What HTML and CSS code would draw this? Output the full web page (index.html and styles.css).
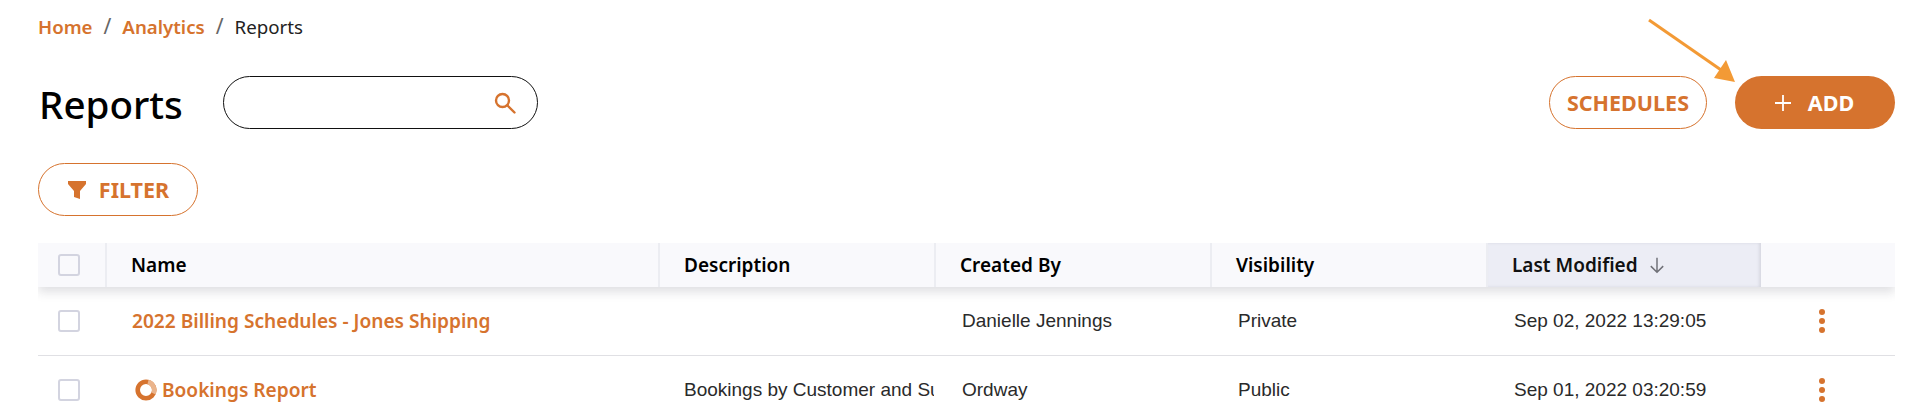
FILE: index.html
```html
<!DOCTYPE html>
<html lang="en">
<head>
<meta charset="utf-8">
<title>Reports</title>
<link rel="stylesheet" href="styles.css">
</head>
<body>
<svg class="arrow" width="100" height="75" viewBox="0 0 100 75"><path d="M3 3 L78 55" stroke="#f39a35" stroke-width="3" fill="none"/><path d="M89 65 L68 61 L80 43 Z" fill="#f39a35"/></svg>
<nav class="crumbs"><a>Home</a><span class="sep">/</span><a>Analytics</a><span class="sep">/</span><span class="cur">Reports</span></nav>
<header class="top">
  <h1>Reports</h1>
  <div class="search">
    <svg width="24" height="24" viewBox="0 0 24 24" fill="none" stroke="#d6732e" stroke-width="2.4"><circle cx="9.5" cy="9.5" r="6.5"/><path d="M14.5 14.5 L21.5 21.5" stroke-linecap="round"/></svg>
  </div>
  <div class="actions">
    <button class="btn outline sched">SCHEDULES</button>
    <button class="btn solid"><svg width="18" height="18" viewBox="0 0 18 18"><path d="M9 1v16M1 9h16" stroke="#fff" stroke-width="1.8"/></svg>ADD</button>
  </div>
</header>
<div class="filters">
  <button class="btn outline filter"><svg width="20" height="20" viewBox="0 0 20 20"><path d="M1 1h18v3l-6 7v8l-6-2v-6L1 4z" fill="#d6732e"/></svg>FILTER</button>
</div>
<section class="table">
  <div class="row head">
    <div class="c check"><span class="box"></span></div>
    <div class="c name">Name</div>
    <div class="c desc">Description</div>
    <div class="c by">Created By</div>
    <div class="c vis">Visibility</div>
    <div class="c mod active">Last Modified <svg width="18" height="18" viewBox="0 0 16 16" fill="none" stroke="#6f7077" stroke-width="1.3"><path d="M8 1.500v13M2.500 9l5.500 5.500L13.500 9"/></svg></div>
    <div class="c more"></div>
  </div>
  <div class="row body">
    <div class="c check"><span class="box"></span></div>
    <div class="c name link">2022 Billing Schedules - Jones Shipping</div>
    <div class="c desc"></div>
    <div class="c by">Danielle Jennings</div>
    <div class="c vis">Private</div>
    <div class="c mod">Sep 02, 2022 13:29:05</div>
    <div class="c more"><span class="dots"><i></i><i></i><i></i></span></div>
  </div>
  <div class="row body">
    <div class="c check"><span class="box"></span></div>
    <div class="c name link"><svg class="ring" width="22" height="22" viewBox="0 0 22 22" fill="none" stroke-width="4.6"><circle cx="11" cy="11" r="8.300" stroke="#d6732e"/><path d="M13 3A8.300 8.300 0 0 1 18.500 14.500" stroke="#eab48c"/></svg>Bookings Report</div>
    <div class="c desc">Bookings by Customer and Su</div>
    <div class="c by">Ordway</div>
    <div class="c vis">Public</div>
    <div class="c mod">Sep 01, 2022 03:20:59</div>
    <div class="c more"><span class="dots"><i></i><i></i><i></i></span></div>
  </div>
</section>
</body>
</html>
```
FILE: styles.css
```css
* { box-sizing: border-box; }
html, body { margin: 0; height: 416px; overflow: hidden; background: #fff; }
body { padding: 14px 27px 0 38px; font-family: "Noto Sans", sans-serif; color: #000; position: relative; }
.arrow { position: absolute; left: 1646px; top: 17px; }
.crumbs { display: flex; align-items: center; height: 24px; font-size: 18.700px; }
.crumbs a { color: #d6732e; font-weight: 600; }
.crumbs .sep { color: #666; margin: 0 11px; font-size: 21px; font-weight: 400; }
.crumbs .cur { color: #222; }
.top { display: flex; align-items: center; margin-top: 38px; height: 53px; }
h1 { margin: 4px 0 0; font-size: 38.600px; font-weight: 500; width: 185px; padding-left: 1px; line-height: 53px; }
.search { width: 315px; height: 53px; border: 1.500px solid #111; border-radius: 27px; display: flex; align-items: center; justify-content: flex-end; padding-right: 20px; }
.actions { margin-left: auto; display: flex; gap: 28px; }
.btn { height: 53px; border-radius: 27px; font-family: "Noto Sans", sans-serif; font-weight: 700; font-size: 21.500px; display: inline-flex; align-items: center; justify-content: center; padding: 0; }
.outline { background: #fff; border: 1px solid #d6732e; color: #d6732e; }
.solid { background: #d6732e; border: 0; color: #fff; width: 160px; gap: 16px; padding-right: 2px; }
.sched { width: 158px; }
.filters { margin-top: 34px; }
.filter { width: 160px; gap: 12px; }
.table { margin-top: 27px; }
.row { display: grid; grid-template-columns: 67px 553px 276px 276px 276px 275px 1fr; }
.head { height: 44px; background: #f9f9fc; font-weight: 600; font-size: 19px; box-shadow: 0 5px 10px rgba(40,40,60,.15); clip-path: inset(0 0 -24px 0); position: relative; }
.c { display: flex; align-items: center; padding-left: 24px; gap: 10px; min-width: 0; white-space: nowrap; overflow: hidden; }
.head .c { border-left: 2px solid #ecedf2; }
.head .check { border-left: 0; }
.head .more { border-left: 0; }
.head .active { background: #ecedf5; box-shadow: inset -2px 0 3px rgba(40,40,60,.1); color: #111; }
.check { padding-left: 20px; }
.head .check { padding-left: 20px; }
.box { width: 22px; height: 22px; border: 2.500px solid #d3d4e0; border-radius: 3px; background: #fff; flex: none; }
.head .box { background: transparent; }
.body { height: 69px; border-bottom: 1px solid #e0e0e4; font-family: "Liberation Sans", sans-serif; font-size: 19px; color: #2a2a2a; }
.body .c { padding-left: 28px; }
.body .desc { padding-left: 26px; }
.body .check { padding-left: 20px; }
.body .link { font-family: "Noto Sans", sans-serif; font-weight: 600; font-size: 19.100px; color: #d6732e; gap: 5px; }
.body .name { padding-left: 27px; }
.ring { margin-left: 3px; flex: none; }
.body .more { padding-left: 58px; }
.dots { display: flex; flex-direction: column; gap: 3px; }
.dots i { width: 6px; height: 6px; border-radius: 50%; background: #d6732e; display: block; }
```
